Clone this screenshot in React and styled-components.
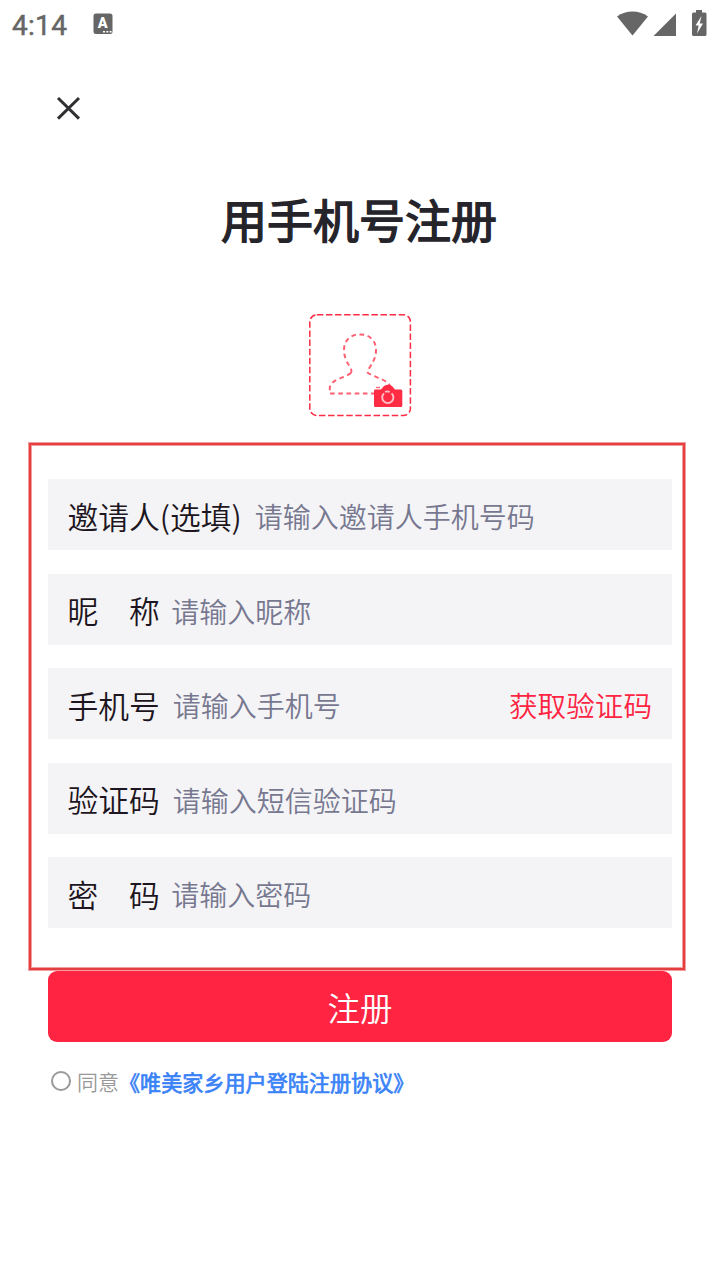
import React from "react";
import styled, { createGlobalStyle } from "styled-components";

const GlobalStyle = createGlobalStyle`
  * {
    box-sizing: border-box;
  }
  body {
    margin: 0;
    background: #ffffff;
    font-family: "Noto Sans CJK SC", "Noto Sans", sans-serif;
  }
`;

const Page = styled.div`
  width: 720px;
  height: 1280px;
  overflow: hidden;
  background: #ffffff;
`;

const StatusBar = styled.header`
  display: flex;
  align-items: center;
  height: 48px;
  padding: 0 13px 0 12px;
  color: #666666;
`;

const Clock = styled.span`
  width: 81px;
  padding-top: 3px;
  font-family: Roboto, sans-serif;
  font-size: 28px;
  letter-spacing: 0.3px;
  -webkit-text-stroke: 0.5px #666666;
  line-height: 32px;
`;

const StatusIcons = styled.div`
  display: flex;
  margin-left: auto;
`;

const NavBar = styled.nav`
  height: 120px;
  padding: 48px 0 0 56px;
`;

const CloseButton = styled.button`
  display: block;
  padding: 0;
  border: none;
  background: none;
`;

const Title = styled.h1`
  margin: 16px 0 0 -2px;
  height: 68px;
  line-height: 68px;
  color: #25242b;
  font-size: 46px;
  font-weight: 400;
  -webkit-text-stroke: 1.4px #25242b;
  text-align: center;
`;

const Avatar = styled.div`
  display: flex;
  justify-content: center;
  margin-top: 61px;
  height: 104px;
`;

const Form = styled.div`
  display: flex;
  flex-direction: column;
  gap: 23.6px;
  width: 656px;
  height: 527px;
  margin: 26px 0 0 29px;
  padding: 34px 11px 0 17px;
  border: 2px solid #e53e40;
  box-shadow: 0 0 0 1px rgba(229, 62, 64, 0.5), inset 0 0 0 1px rgba(229, 62, 64, 0.5);
`;

const Row = styled.div`
  display: flex;
  align-items: center;
  height: 71px;
  flex-shrink: 0;
  padding: 2px 20px 0 19.4px;
  background: #f4f4f7;
`;

const Label = styled.label`
  color: #1d1520;
  font-size: 30.8px;
  font-weight: 350;
  line-height: 44px;
  white-space: pre;
`;

const Placeholder = styled.span`
  margin-left: ${(props) => props.$gap}px;
  padding-top: 1px;
  color: #77788f;
  font-size: 28px;
  font-weight: 350;
  line-height: 44px;
`;

const CodeButton = styled.span`
  margin-left: auto;
  padding-top: 1px;
  color: #ff2442;
  font-size: 28.6px;
  font-weight: 350;
  line-height: 44px;
`;

const SubmitButton = styled.button`
  display: block;
  width: 624px;
  height: 71px;
  margin: 1px 0 0 48px;
  padding: 0;
  border: none;
  border-radius: 9px;
  background: #ff2442;
  color: #ffffff;
  font-family: inherit;
  font-size: 32.5px;
  font-weight: 350;
  line-height: 60px;
`;

const Agreement = styled.div`
  display: flex;
  align-items: center;
  height: 32px;
  margin: 23px 0 0 50.5px;
  font-size: 21px;
  line-height: 32px;
`;

const Radio = styled.span`
  width: 20px;
  height: 20px;
  margin: 0 6.5px 1px 0;
  border: 2px solid #999999;
  border-radius: 50%;
`;

const Agree = styled.span`
  color: #999999;
  font-weight: 350;
`;

const Protocol = styled.a`
  padding-top: 1px;
  color: #3a82f7;
  font-size: 21.1px;
  font-weight: 400;
  -webkit-text-stroke: 0.7px #3a82f7;
`;

const fields = [
  { label: "邀请人(选填)", hint: "请输入邀请人手机号码", gap: 13 },
  { label: "昵\u3000称", hint: "请输入昵称", gap: 11.5 },
  { label: "手机号", hint: "请输入手机号", gap: 13, code: true },
  { label: "验证码", hint: "请输入短信验证码", gap: 13 },
  { label: "密\u3000码", hint: "请输入密码", gap: 11.5 },
];

function KeyboardIcon() {
  return (
    <svg width="20" height="22" viewBox="0 0 20 22">
      <rect x="0.5" y="0.5" width="19" height="20.5" rx="2.5" fill="#666666" />
      <text
        x="9.8"
        y="15.2"
        textAnchor="middle"
        fontFamily="Roboto, sans-serif"
        fontSize="14.5"
        fontWeight="900"
        fill="#ffffff"
      >
        A
      </text>
      <path d="M10 18.8 h2 M13.3 18.8 h2 M16.6 18.8 h2" stroke="#ffffff" strokeWidth="1.6" />
    </svg>
  );
}

function SystemIcons() {
  return (
    <svg width="91" height="28" viewBox="616 10 91 28" fill="#666666">
      <path d="M617 16.5 C626 9.8 639 9.8 648 16.5 L632.5 35.5 Z" />
      <path d="M676 13.5 V36 H653.5 Z" />
      <path d="M696 10 h6 v2.5 h3 q1.5 0 1.5 1.5 v20.5 q0 1.5 -1.5 1.5 h-11.5 q-1.5 0 -1.5 -1.5 v-20.5 q0 -1.5 1.5 -1.5 h2.5 z" />
      <path d="M701.5 16 L695.5 25.5 H698.7 L697 33.5 L703 23.5 H699.7 Z" fill="#ffffff" />
    </svg>
  );
}

function CloseIcon() {
  return (
    <svg width="25" height="25" viewBox="0 0 25 25" style={{ display: "block" }}>
      <path d="M2 2 L23 22.6 M23 2 L2 22.6" stroke="#303033" strokeWidth="3" />
    </svg>
  );
}

function AvatarIcon() {
  return (
    <svg width="104" height="104" viewBox="308 313 104 104" fill="none" stroke="#ff2c43">
      <rect x="309.8" y="314.8" width="100.6" height="100.6" rx="7" strokeWidth="1.5" strokeDasharray="6.5 2.6" />
      <path
        d="M351 373 C354 369 344 363 344 350 C344 340 351 334.4 360 334.4 C369 334.4 376 340 376 350 C376 363 366 369 368 373 C376 378 388 380 390 386 M351 373 C344 378 330 380 329.8 388 L329.8 393.5 H374"
        strokeWidth="2"
        strokeDasharray="4.6 3.6"
        opacity="0.75"
      />
      <path
        d="M374.8 389.5 H381 L384 386 Q388 383.5 392 386 L395 389.5 H401 Q402.3 389.5 402.3 391 V405.5 Q402.3 407 401 407 H375.3 Q374 407 374 405.5 V391 Q374 389.5 374.8 389.5 Z"
        fill="#ff2c43"
        stroke="none"
      />
      <path d="M376 387.5 h4" strokeWidth="1.4" opacity="0.7" />
      <path d="M384 393.4 A5.6 5.6 0 1 0 391.6 393.4 M385 391.8 Q388 390.8 389.6 392.2" stroke="#ffc0c7" strokeWidth="1.9" />
    </svg>
  );
}

export default function App() {
  return (
    <Page>
      <GlobalStyle />
      <StatusBar>
        <Clock>4:14</Clock>
        <KeyboardIcon />
        <StatusIcons>
          <SystemIcons />
        </StatusIcons>
      </StatusBar>
      <NavBar>
        <CloseButton aria-label="关闭">
          <CloseIcon />
        </CloseButton>
      </NavBar>
      <Title>用手机号注册</Title>
      <Avatar>
        <AvatarIcon />
      </Avatar>
      <Form>
        {fields.map((field) => (
          <Row key={field.label}>
            <Label>{field.label}</Label>
            <Placeholder $gap={field.gap}>{field.hint}</Placeholder>
            {field.code && <CodeButton>获取验证码</CodeButton>}
          </Row>
        ))}
      </Form>
      <SubmitButton>注册</SubmitButton>
      <Agreement>
        <Radio />
        <Agree>同意</Agree>
        <Protocol>《唯美家乡用户登陆注册协议》</Protocol>
      </Agreement>
    </Page>
  );
}
